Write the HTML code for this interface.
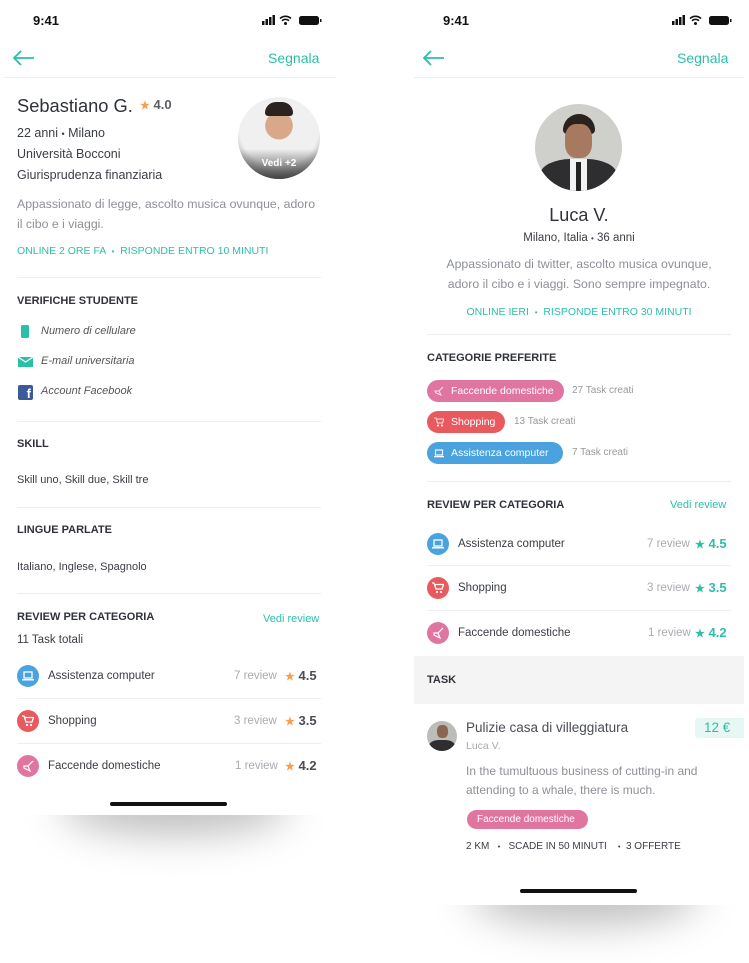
<!DOCTYPE html>
<html><head><meta charset="utf-8"><style>
*{margin:0;padding:0;box-sizing:border-box}
body{width:749px;height:963px;background:#fff;position:relative;overflow:hidden;font-family:"Liberation Sans",sans-serif;color:#3a3d44}
.ph{position:absolute;background:#fff;overflow:hidden}
.sh{position:absolute;border-radius:50%;background:rgba(0,0,0,.25);filter:blur(20px)}
.t{position:absolute;line-height:20px;white-space:nowrap}
.hr{position:absolute;height:1px;background:#eceef0}
.teal{color:#2cbfa8}
.grey{color:#8d9096}
.lt{color:#a8abb0}
.h{font-weight:bold;font-size:11px;color:#2f3238}
.ic{position:absolute;width:22px;height:22px;border-radius:50%}
.ic svg{position:absolute;left:5px;top:5px}
.pill{position:absolute;height:22px;border-radius:11px;color:#fff;font-size:10.5px;line-height:22px;padding-left:24px}
.pill svg{position:absolute;left:7px;top:6px}
.star{color:#f6a04d}
</style></head><body>
<div class="sh" style="left:60px;top:775px;width:230px;height:60px"></div>
<div class="sh" style="left:470px;top:865px;width:230px;height:60px"></div>

<!-- LEFT PHONE -->
<div class="ph" style="left:4px;top:0;width:332px;height:815px">
<div class="t" style="left:29px;top:11px;font-weight:bold;font-size:13px;color:#111">9:41</div>
<svg style="position:absolute;left:258px;top:14px" width="64" height="12"><rect x="0" y="7" width="2.5" height="4" fill="#111"/><rect x="3.5" y="5" width="2.5" height="6" fill="#111"/><rect x="7" y="3" width="2.5" height="8" fill="#111"/><rect x="10.5" y="1" width="2.5" height="10" fill="#111"/><path d="M18 4.5a8 8 0 0 1 11 0M20 6.8a5 5 0 0 1 7 0" stroke="#111" stroke-width="1.6" fill="none"/><circle cx="23.5" cy="9.5" r="1.5" fill="#111"/><rect x="37" y="2" width="20" height="9" rx="2.5" fill="#111"/><rect x="58" y="5" width="1.5" height="3" fill="#111"/></svg>
<svg style="position:absolute;left:8px;top:50px" width="24" height="16"><path d="M22 8H2M9 1L2 8l7 7" stroke="#2cbfa8" stroke-width="1.8" fill="none"/></svg>
<div class="t teal" style="left:264px;top:48px;font-size:14px">Segnala</div>
<div class="hr" style="left:0;top:77px;width:332px"></div>
<div class="t" style="left:13px;top:94px;font-size:18.3px;line-height:24px;color:#2f3238">Sebastiano G.</div>
<div class="t" style="left:136px;top:95px;font-size:13px;font-weight:bold;color:#5a5d63"><span class="star" style="font-size:11px">★</span> 4.0</div>
<div style="position:absolute;left:234px;top:97px;width:82px;height:82px;border-radius:50%;background:radial-gradient(circle at 50% 35%,#d9a88a 0 20%,#f0f0f0 21% 60%,#555 100%);overflow:hidden"><div style="position:absolute;left:27px;top:5px;width:28px;height:14px;background:#2a2320;border-radius:14px 14px 4px 4px"></div><div style="position:absolute;bottom:0;left:0;right:0;height:30px;background:linear-gradient(transparent,#444)"></div><div style="position:absolute;left:0;right:0;top:61px;text-align:center;color:#fff;font-size:10px;font-weight:bold">Vedi +2</div></div>
<div class="t" style="left:13px;top:123px;font-size:12.5px">22 anni <span style="font-size:9px">•</span> Milano</div>
<div class="t" style="left:13px;top:144px;font-size:12.5px">Università Bocconi</div>
<div class="t" style="left:13px;top:165px;font-size:12.5px">Giurisprudenza finanziaria</div>
<div class="t grey" style="left:13px;top:194px;font-size:12.3px">Appassionato di legge, ascolto musica ovunque, adoro</div>
<div class="t grey" style="left:13px;top:214px;font-size:12.3px">il cibo e i viaggi.</div>
<div class="t teal" style="left:13px;top:241px;font-size:10.5px">ONLINE 2 ORE FA &nbsp;<span style="font-size:8px">•</span>&nbsp; RISPONDE ENTRO 10 MINUTI</div>
<div class="hr" style="left:13px;top:277px;width:304px"></div>
<div class="t h" style="left:13px;top:291px">VERIFICHE STUDENTE</div>
<div style="position:absolute;left:17px;top:325px;width:8px;height:13px;background:#2cbfa8;border-radius:1.5px"></div>
<div class="t" style="left:37px;top:321px;font-size:11px;font-style:italic;color:#555">Numero di cellulare</div>
<svg style="position:absolute;left:14px;top:357px" width="15" height="10"><rect width="15" height="10" fill="#2cbfa8"/><path d="M0 0l7.5 5L15 0" stroke="#fff" stroke-width="1.2" fill="none"/></svg>
<div class="t" style="left:37px;top:351px;font-size:11px;font-style:italic;color:#555">E-mail universitaria</div>
<div style="position:absolute;left:14px;top:385px;width:15px;height:15px;background:#3b5a9a;border-radius:2px;color:#fff;font-weight:bold;font-size:13px;line-height:17px;text-align:right;padding-right:2px;overflow:hidden">f</div>
<div class="t" style="left:37px;top:381px;font-size:11px;font-style:italic;color:#555">Account Facebook</div>
<div class="hr" style="left:13px;top:421px;width:304px"></div>
<div class="t h" style="left:13px;top:434px">SKILL</div>
<div class="t" style="left:13px;top:470px;font-size:11px">Skill uno, Skill due, Skill tre</div>
<div class="hr" style="left:13px;top:507px;width:304px"></div>
<div class="t h" style="left:13px;top:520px">LINGUE PARLATE</div>
<div class="t" style="left:13px;top:557px;font-size:11px">Italiano, Inglese, Spagnolo</div>
<div class="hr" style="left:13px;top:593px;width:304px"></div>
<div class="t h" style="left:13px;top:607px">REVIEW PER CATEGORIA</div>
<div class="t teal" style="left:259px;top:609px;font-size:11px">Vedi review</div>
<div class="t" style="left:13px;top:630px;font-size:11.5px">11 Task totali</div>
<div class="ic" style="left:13px;top:665px;background:#4aa3df"><svg width="12" height="12"><rect x="2" y="2" width="8" height="6" fill="none" stroke="#fff" stroke-width="1.3"/><rect x="0" y="9" width="12" height="1.5" fill="#fff"/></svg></div>
<div class="t" style="left:44px;top:666px;font-size:11.5px">Assistenza computer</div>
<div class="t lt" style="left:230px;top:666px;font-size:11.5px">7 review</div>
<div class="t" style="left:281px;top:666px;font-size:13px;font-weight:bold;color:#4a4d54"><span class="star" style="font-size:11px">★</span> 4.5</div>
<div class="hr" style="left:13px;top:698px;width:304px"></div>
<div class="ic" style="left:13px;top:710px;background:#e95a5f"><svg width="12" height="12"><path d="M0 1h2l2 6h6l1.5-4.5H3" fill="none" stroke="#fff" stroke-width="1.3"/><circle cx="5" cy="10" r="1.1" fill="#fff"/><circle cx="9" cy="10" r="1.1" fill="#fff"/></svg></div>
<div class="t" style="left:44px;top:711px;font-size:11.5px">Shopping</div>
<div class="t lt" style="left:230px;top:711px;font-size:11.5px">3 review</div>
<div class="t" style="left:281px;top:711px;font-size:13px;font-weight:bold;color:#4a4d54"><span class="star" style="font-size:11px">★</span> 3.5</div>
<div class="hr" style="left:13px;top:743px;width:304px"></div>
<div class="ic" style="left:13px;top:755px;background:#e076a0"><svg width="12" height="12"><path d="M11 1L6 6M2 6l4 0 2 5-6-3z" fill="none" stroke="#fff" stroke-width="1.2"/></svg></div>
<div class="t" style="left:44px;top:756px;font-size:11.5px">Faccende domestiche</div>
<div class="t lt" style="left:231px;top:756px;font-size:11.5px">1 review</div>
<div class="t" style="left:281px;top:756px;font-size:13px;font-weight:bold;color:#4a4d54"><span class="star" style="font-size:11px">★</span> 4.2</div>
<div style="position:absolute;left:106px;top:802px;width:117px;height:4px;border-radius:2px;background:#111"></div>
</div>

<!-- RIGHT PHONE -->
<div class="ph" style="left:414px;top:0;width:330px;height:905px">
<div class="t" style="left:29px;top:11px;font-weight:bold;font-size:13px;color:#111">9:41</div>
<svg style="position:absolute;left:258px;top:14px" width="64" height="12"><rect x="0" y="7" width="2.5" height="4" fill="#111"/><rect x="3.5" y="5" width="2.5" height="6" fill="#111"/><rect x="7" y="3" width="2.5" height="8" fill="#111"/><rect x="10.5" y="1" width="2.5" height="10" fill="#111"/><path d="M18 4.5a8 8 0 0 1 11 0M20 6.8a5 5 0 0 1 7 0" stroke="#111" stroke-width="1.6" fill="none"/><circle cx="23.5" cy="9.5" r="1.5" fill="#111"/><rect x="37" y="2" width="20" height="9" rx="2.5" fill="#111"/><rect x="58" y="5" width="1.5" height="3" fill="#111"/></svg>
<svg style="position:absolute;left:8px;top:50px" width="24" height="16"><path d="M22 8H2M9 1L2 8l7 7" stroke="#2cbfa8" stroke-width="1.8" fill="none"/></svg>
<div class="t teal" style="left:263px;top:48px;font-size:14px">Segnala</div>
<div class="hr" style="left:0;top:77px;width:330px"></div>
<div style="position:absolute;left:121px;top:104px;width:87px;height:87px;border-radius:50%;background:#cfcfcc;overflow:hidden"><div style="position:absolute;left:28px;top:10px;width:32px;height:20px;background:#2b221d;border-radius:16px 16px 4px 4px"></div><div style="position:absolute;left:30px;top:20px;width:27px;height:34px;background:#a77a5f;border-radius:40%"></div><div style="position:absolute;left:5px;top:55px;width:77px;height:40px;background:#2e2e30;border-radius:40% 40% 0 0"></div><div style="position:absolute;left:35px;top:55px;width:17px;height:35px;background:#f2f2f2"></div><div style="position:absolute;left:41px;top:58px;width:5px;height:30px;background:#222"></div></div>
<div class="t" style="left:0;width:330px;text-align:center;top:203px;font-size:18px;line-height:24px;color:#2f3238">Luca V.</div>
<div class="t" style="left:0;width:330px;text-align:center;top:228px;font-size:11.5px">Milano, Italia <span style="font-size:8px">•</span> 36 anni</div>
<div class="t grey" style="left:0;width:330px;text-align:center;top:254px;font-size:12.3px">Appassionato di twitter, ascolto musica ovunque,</div>
<div class="t grey" style="left:0;width:330px;text-align:center;top:274px;font-size:12.3px">adoro il cibo e i viaggi. Sono sempre impegnato.</div>
<div class="t teal" style="left:0;width:330px;text-align:center;top:302px;font-size:10.5px">ONLINE IERI &nbsp;<span style="font-size:8px">•</span>&nbsp; RISPONDE ENTRO 30 MINUTI</div>
<div class="hr" style="left:13px;top:334px;width:304px"></div>
<div class="t h" style="left:13px;top:348px">CATEGORIE PREFERITE</div>
<div class="pill" style="left:13px;top:380px;width:137px;background:#e076a0"><svg width="10" height="10"><path d="M9 1L5 5M1 5h4l2 4-5-2z" fill="none" stroke="#fff" stroke-width="1" opacity=".8"/></svg>Faccende domestiche</div>
<div class="t lt" style="left:158px;top:381px;font-size:10px;color:#999">27 Task creati</div>
<div class="pill" style="left:13px;top:411px;width:78px;background:#e95a5f"><svg width="10" height="10"><path d="M0 1h2l1.5 5h5L10 2H3" fill="none" stroke="#fff" stroke-width="1.1" opacity=".8"/><circle cx="4" cy="8.5" r="1" fill="#fff"/><circle cx="8" cy="8.5" r="1" fill="#fff"/></svg>Shopping</div>
<div class="t lt" style="left:100px;top:412px;font-size:10px;color:#999">13 Task creati</div>
<div class="pill" style="left:13px;top:442px;width:136px;background:#4aa3df"><svg width="10" height="10"><rect x="1.5" y="2" width="7" height="5" fill="none" stroke="#fff" stroke-width="1.1"/><rect x="0" y="8" width="10" height="1.3" fill="#fff"/></svg>Assistenza computer</div>
<div class="t lt" style="left:158px;top:443px;font-size:10px;color:#999">7 Task creati</div>
<div class="hr" style="left:13px;top:481px;width:304px"></div>
<div class="t h" style="left:13px;top:495px">REVIEW PER CATEGORIA</div>
<div class="t teal" style="left:256px;top:495px;font-size:11px">Vedi review</div>
<div class="ic" style="left:13px;top:533px;background:#4aa3df"><svg width="12" height="12"><rect x="2" y="2" width="8" height="6" fill="none" stroke="#fff" stroke-width="1.3"/><rect x="0" y="9" width="12" height="1.5" fill="#fff"/></svg></div>
<div class="t" style="left:44px;top:534px;font-size:11.5px">Assistenza computer</div>
<div class="t lt" style="left:233px;top:534px;font-size:11.5px">7 review</div>
<div class="t teal" style="left:281px;top:534px;font-size:13px;font-weight:bold"><span style="font-size:11px">★</span> 4.5</div>
<div class="hr" style="left:13px;top:565px;width:304px"></div>
<div class="ic" style="left:13px;top:577px;background:#e95a5f"><svg width="12" height="12"><path d="M0 1h2l2 6h6l1.5-4.5H3" fill="none" stroke="#fff" stroke-width="1.3"/><circle cx="5" cy="10" r="1.1" fill="#fff"/><circle cx="9" cy="10" r="1.1" fill="#fff"/></svg></div>
<div class="t" style="left:44px;top:578px;font-size:11.5px">Shopping</div>
<div class="t lt" style="left:233px;top:578px;font-size:11.5px">3 review</div>
<div class="t teal" style="left:281px;top:578px;font-size:13px;font-weight:bold"><span style="font-size:11px">★</span> 3.5</div>
<div class="hr" style="left:13px;top:610px;width:304px"></div>
<div class="ic" style="left:13px;top:622px;background:#e076a0"><svg width="12" height="12"><path d="M11 1L6 6M2 6l4 0 2 5-6-3z" fill="none" stroke="#fff" stroke-width="1.2"/></svg></div>
<div class="t" style="left:44px;top:623px;font-size:11.5px">Faccende domestiche</div>
<div class="t lt" style="left:234px;top:623px;font-size:11.5px">1 review</div>
<div class="t teal" style="left:281px;top:623px;font-size:13px;font-weight:bold"><span style="font-size:11px">★</span> 4.2</div>
<div style="position:absolute;left:0;top:656px;width:330px;height:48px;background:#f4f4f4"></div>
<div class="t h" style="left:13px;top:670px">TASK</div>
<div style="position:absolute;left:13px;top:721px;width:30px;height:30px;border-radius:50%;background:#bcbcb8;overflow:hidden"><div style="position:absolute;left:10px;top:4px;width:11px;height:13px;background:#8a654f;border-radius:40%"></div><div style="position:absolute;left:2px;top:19px;width:26px;height:14px;background:#2e2e30;border-radius:40% 40% 0 0"></div></div>
<div class="t" style="left:52px;top:718px;font-size:13.5px;color:#4a4d54">Pulizie casa di villeggiatura</div>
<div class="t lt" style="left:52px;top:736px;font-size:10.5px">Luca V.</div>
<div style="position:absolute;left:281px;top:718px;width:49px;height:20px;background:#e6f7f4;border-radius:3px 0 0 3px"></div>
<div class="t teal" style="left:290px;top:718px;font-size:13.5px">12 €</div>
<div class="t grey" style="left:52px;top:761px;font-size:12px">In the tumultuous business of cutting-in and</div>
<div class="t grey" style="left:52px;top:780px;font-size:12px">attending to a whale, there is much.</div>
<div class="pill" style="left:53px;top:810px;width:121px;height:19px;line-height:19px;padding-left:10px;background:#e076a0;font-size:10px">Faccende domestiche</div>
<div class="t" style="left:52px;top:837px;font-size:10px">2 KM &nbsp;&nbsp;<span style="font-size:7px">•</span>&nbsp;&nbsp; SCADE IN 50 MINUTI &nbsp;&nbsp;&nbsp;<span style="font-size:7px">•</span>&nbsp; 3 OFFERTE</div>
<div style="position:absolute;left:106px;top:889px;width:117px;height:4px;border-radius:2px;background:#111"></div>
</div>
</body></html>
